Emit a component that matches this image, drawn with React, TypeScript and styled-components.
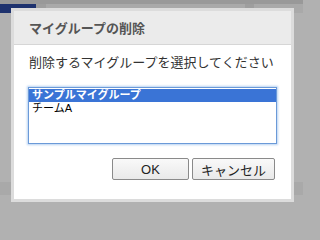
import React from "react";
import styled, { createGlobalStyle } from "styled-components";

const GlobalStyle = createGlobalStyle`
  html, body {
    margin: 0;
    padding: 0;
  }

  body {
    font-family: "Liberation Sans", "Noto Sans CJK JP", sans-serif;
    background: #b1b1b1;
  }
`;

const Page = styled.div`
  position: relative;
  width: 303px;
  height: 210px;
  overflow: hidden;
  background: #b1b1b1;
`;

const Backdrop = styled.div`
  display: flex;
  flex-direction: column;
  height: 100%;
`;

const TopStrip = styled.div`
  height: 4px;
  background: #999;
`;

const NavRow = styled.div`
  display: flex;
  height: 9px;
  background: #9e9e9e;
`;

const Logo = styled.div`
  width: 36px;
  background: #1e326e;
`;

const NavTab = styled.div<{ $width: number; $gap: number }>`
  width: ${(p) => p.$width}px;
  margin-left: ${(p) => p.$gap}px;
  background: #a9a9a9;
`;

const Main = styled.div`
  height: 169px;
`;

const FooterBand = styled.div`
  height: 13px;
  background: #a9a9a9;
`;

const Dialog = styled.div`
  position: absolute;
  left: 11px;
  top: 8px;
  width: 277px;
  height: 188px;
  border: 3px solid #dcdcdc;
  background: #fff;
  display: flex;
  flex-direction: column;
`;

const Header = styled.div`
  height: 33px;
  padding-left: 15px;
  display: flex;
  align-items: center;
  background: #ebebeb;
  border-bottom: 1px solid #d6d6d6;
  font-size: 13px;
  font-weight: bold;
  color: #555;
`;

const Body = styled.div`
  flex: 1;
  padding: 9px 14px 0 14px;
  display: flex;
  flex-direction: column;
`;

const Message = styled.p`
  margin: 0 0 0 1px;
  font-size: 13px;
  line-height: 18px;
  color: #333;
`;

const ListBox = styled.div`
  margin-top: 15px;
  height: 54px;
  border: 1px solid #6b9ad8;
  box-shadow: 0 0 2px 1px #b8d2f2;
  background: #fff;
  padding-top: 1px;
`;

const Option = styled.div<{ $selected?: boolean }>`
  height: 13px;
  padding-left: 3px;
  font-size: 11px;
  line-height: 13px;
  background: ${(p) => (p.$selected ? "#3a74d6" : "transparent")};
  color: ${(p) => (p.$selected ? "#fff" : "#000")};
  font-weight: ${(p) => (p.$selected ? "bold" : "normal")};
`;

const Actions = styled.div`
  margin-top: 14px;
  padding-right: 2px;
  display: flex;
  justify-content: flex-end;
  gap: 3px;
`;

const Button = styled.button<{ $width: number }>`
  width: ${(p) => p.$width}px;
  height: 22px;
  padding: 0;
  border: 1px solid #8a8a8a;
  border-radius: 2px;
  background: linear-gradient(#f9f9f9, #e9e9e9);
  font-family: "Liberation Sans", "Noto Sans CJK JP", sans-serif;
  font-size: 13px;
  color: #222;
`;

function App() {
  return (
    <Page>
      <GlobalStyle />
      <Backdrop>
        <TopStrip />
        <NavRow>
          <Logo />
          <NavTab $width={199} $gap={10} />
          <NavTab $width={49} $gap={9} />
        </NavRow>
        <Main />
        <FooterBand />
      </Backdrop>
      <Dialog>
        <Header>マイグループの削除</Header>
        <Body>
          <Message>削除するマイグループを選択してください</Message>
          <ListBox role="listbox">
            <Option $selected>サンプルマイグループ</Option>
            <Option>チームA</Option>
          </ListBox>
          <Actions>
            <Button $width={77}>OK</Button>
            <Button $width={83}>キャンセル</Button>
          </Actions>
        </Body>
      </Dialog>
    </Page>
  );
}

export default App;
